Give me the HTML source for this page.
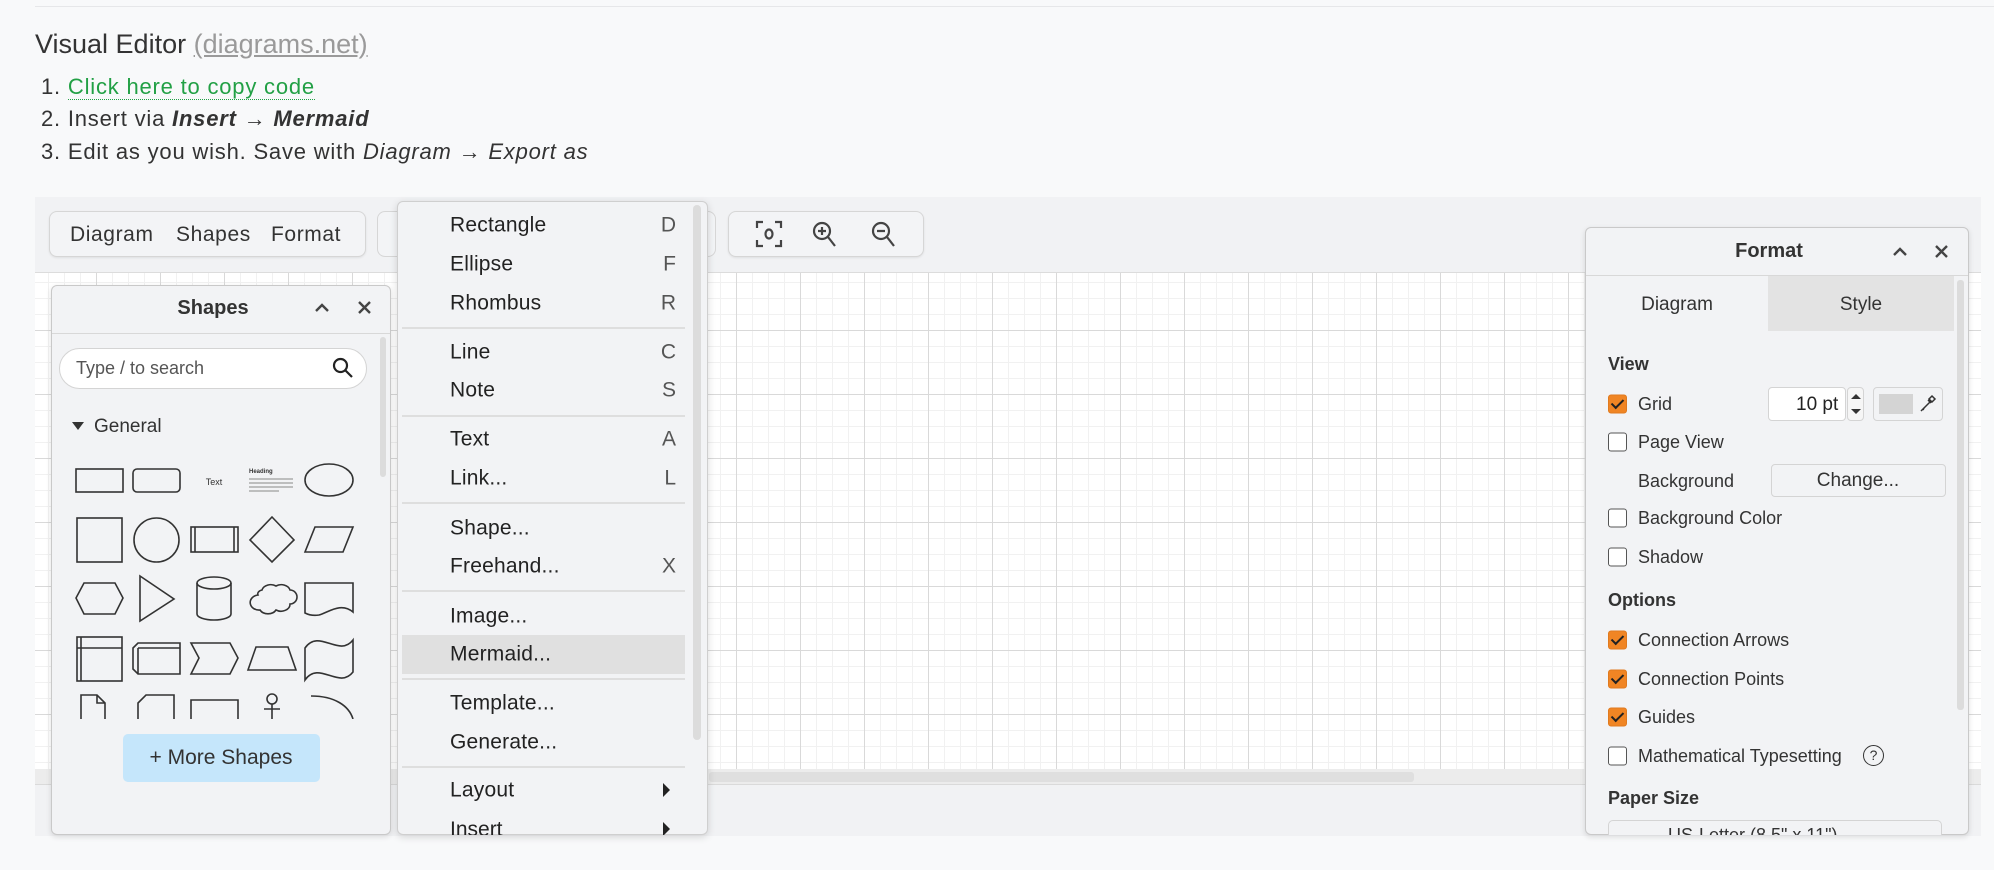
<!DOCTYPE html>
<html><head><meta charset="utf-8"><style>
*{box-sizing:border-box;margin:0;padding:0}
body{width:1994px;height:870px;background:#f8f9fa;font-family:"Liberation Sans",sans-serif;color:#333;position:relative;overflow:hidden}
.a{position:absolute}
.t{position:absolute;white-space:nowrap;line-height:1}
.mi{position:absolute;left:450px;font-size:21px;color:#222;white-space:nowrap;line-height:1;transform:translateY(-50%);letter-spacing:0.2px}
.sc{position:absolute;right:1318px;font-size:21px;color:#555;line-height:1;transform:translateY(-50%)}
.sep{position:absolute;left:402px;width:283px;height:2px;background:#dedede}
.fl{position:absolute;left:1638px;font-size:18px;color:#333;line-height:1;transform:translateY(-50%);white-space:nowrap}
.cb{position:absolute;left:1608px;width:19px;height:19px;border:1.5px solid #555;border-radius:3px;background:#fff;transform:translateY(-50%)}
.cb.on{background:#f08524;border-color:#e07a1f}
.cb.on::after{content:"";position:absolute;left:5px;top:1px;width:5px;height:10px;border:solid #222;border-width:0 2.5px 2.5px 0;transform:rotate(45deg)}
.fh{position:absolute;left:1608px;font-size:18px;font-weight:bold;color:#333;line-height:1;transform:translateY(-50%)}
.li{position:absolute;left:41px;font-size:22px;letter-spacing:0.8px;color:#333;white-space:nowrap;line-height:1}
.tb{position:absolute;top:224px;font-size:21px;letter-spacing:0.6px;color:#333;line-height:1}
</style></head><body>
<div class="a" style="left:35px;top:6px;width:1959px;height:1px;background:#e6e7e9"></div>
<div class="t" style="left:35px;top:31px;font-size:27px;color:#333">Visual Editor <span style="color:#9a9a9a;text-decoration:underline">(diagrams.net)</span></div>
<div class="li" style="top:76px">1. <span style="color:#22a045;border-bottom:1.5px dotted #22a045">Click here to copy code</span></div>
<div class="li" style="top:108px">2. Insert via <b><i>Insert</i></b> → <b><i>Mermaid</i></b></div>
<div class="li" style="top:141px">3. Edit as you wish. Save with <i>Diagram</i> → <i>Export as</i></div>

<!-- editor -->
<div class="a" style="left:35px;top:197px;width:1946px;height:639px;background:#f1f2f4"></div>
<div class="a" style="left:35px;top:272px;width:1946px;height:497px;background-color:#fff;background-image:linear-gradient(to right,#d9d9d9 1px,transparent 1px),linear-gradient(to bottom,#d9d9d9 1px,transparent 1px),linear-gradient(to right,#f1f1f1 1px,transparent 1px),linear-gradient(to bottom,#f1f1f1 1px,transparent 1px);background-size:64px 64px,64px 64px,16px 16px,16px 16px;background-position:61px 57px,61px 57px,13px 9px,13px 9px;border-top:1px solid #dcdcdc"></div>
<div class="a" style="left:35px;top:769px;width:1946px;height:16px;background:#ececec;border-bottom:1px solid #dadada"></div>
<div class="a" style="left:709px;top:772px;width:705px;height:10px;background:#dfdfdf;border-radius:3px"></div>

<!-- toolbars -->
<div class="a" style="left:49px;top:211px;width:317px;height:46px;border:1px solid #d6d6d6;border-radius:8px;background:#f3f4f6;box-shadow:0 1px 2px rgba(0,0,0,.08)"></div>
<div class="tb" style="left:70px">Diagram</div>
<div class="tb" style="left:176px">Shapes</div>
<div class="tb" style="left:271px">Format</div>
<div class="a" style="left:377px;top:211px;width:339px;height:46px;border:1px solid #d6d6d6;border-radius:8px;background:#f3f4f6"></div>
<div class="a" style="left:728px;top:211px;width:196px;height:46px;border:1px solid #d6d6d6;border-radius:8px;background:#f3f4f6;box-shadow:0 1px 2px rgba(0,0,0,.08)"></div>
<svg class="a" style="left:755px;top:219px" width="160" height="30" viewBox="0 0 160 30" fill="none" stroke="#444" stroke-width="2.2">
<path d="M2 9V3h6M20 3h6v6M26 21v6h-6M8 27H2v-6"/><ellipse cx="14" cy="15" rx="3.5" ry="4.5"/>
<circle cx="67" cy="12" r="8"/><path d="M73 18l7 9M63 12h8M67 8v8"/>
<circle cx="126" cy="12" r="8"/><path d="M132 18l7 9M122 12h8"/>
</svg>

<!-- shapes panel -->
<div class="a" style="left:51px;top:285px;width:340px;height:550px;background:#f2f3f5;border:1px solid #c9c9c9;border-radius:6px;box-shadow:0 2px 6px rgba(0,0,0,.12)"></div>
<div class="t" style="left:213px;top:298px;font-size:20px;font-weight:bold;color:#333;transform:translateX(-50%)">Shapes</div>
<svg class="a" style="left:313px;top:298px" width="60" height="20" fill="none" stroke="#444" stroke-width="2.4"><path d="M3 13l6-6 6 6"/><path d="M46 4l11 11M57 4L46 15"/></svg>
<div class="a" style="left:52px;top:333px;width:338px;height:1px;background:#d8d8d8"></div>
<div class="a" style="left:380px;top:337px;width:6px;height:140px;background:#dcdcdc;border-radius:3px"></div>
<div class="a" style="left:59px;top:348px;width:308px;height:41px;background:#fff;border:1px solid #d4d4d4;border-radius:21px"></div>
<div class="t" style="left:76px;top:359px;font-size:18px;color:#555">Type / to search</div>
<svg class="a" style="left:332px;top:357px" width="22" height="22" fill="none" stroke="#222" stroke-width="2.2"><circle cx="8.5" cy="8.5" r="6.5"/><path d="M13 13l7 7"/></svg>
<svg class="a" style="left:71px;top:421px" width="14" height="10"><path d="M1 1h12L7 9z" fill="#333"/></svg>
<div class="t" style="left:94px;top:417px;font-size:19px;color:#333">General</div>
<svg class="a" style="left:51px;top:440px" width="340" height="279" viewBox="51 440 340 279" fill="none" stroke="#333" stroke-width="1.6">
<rect x="76" y="469" width="47" height="23"/><rect x="133" y="469" width="47" height="23" rx="4"/>
<text x="214" y="485" font-size="9" fill="#333" stroke="none" text-anchor="middle" font-family="Liberation Sans">Text</text>
<text x="249" y="473" font-size="6" font-weight="bold" fill="#333" stroke="none" font-family="Liberation Sans">Heading</text>
<path d="M249 479h44M249 483h44M249 487h44M249 491h30" stroke="#888" stroke-width="1"/>
<ellipse cx="329" cy="480" rx="24" ry="16"/>
<rect x="77" y="518" width="45" height="44"/><ellipse cx="156.5" cy="540" rx="22.5" ry="22"/>
<rect x="191" y="527" width="47" height="25"/><path d="M195 527v25M234 527v25"/>
<path d="M272 517l22 23-22 22-22-22z"/><path d="M315 527h38l-10 25h-38z"/>
<path d="M84 583h31l8 15-8 16H84l-8-16z"/><path d="M140 576l34 23-34 22z"/>
<path d="M197 583v31a17 6 0 0 0 34 0v-31"/><ellipse cx="214" cy="583" rx="17" ry="6"/>
<path d="M262 590a9 7 0 0 1 14-4a9 7 0 0 1 14 4a6 6 0 0 1 0 14a9 7 0 0 1-14 6a9 7 0 0 1-16 0a7 6 0 0 1-2-15a6 4 0 0 1 4-5z"/>
<path d="M305 583h48v29c-12-10-24 0-34 3c-6 1-10 0-14-2z"/>
<rect x="77" y="637" width="45" height="44"/><path d="M81 637v44M77 648h45"/>
<path d="M133 648l5-5h42v31h-42l-5-5z M138 648h42M138 648v26"/>
<path d="M191 643h39l8 15-8 16h-39l8-16z"/><path d="M256 647h32l8 23h-48z"/>
<path d="M305 648c14-20 34 10 48-8v32c-14 18-34-12-48 8z"/>
<path d="M81 719v-24h16l8 8v16M97 695v8h8"/><path d="M138 719v-16l8-8h28v24"/>
<path d="M191 719v-19h47v19"/><circle cx="272" cy="699" r="5"/><path d="M272 704v15M264 709h16"/>
<path d="M311 696c24 0 38 10 42 23"/>
</svg>
<div class="a" style="left:123px;top:734px;width:197px;height:48px;background:#c5e6fb;border-radius:5px"></div>
<div class="t" style="left:221px;top:747px;font-size:21px;color:#333;transform:translateX(-50%)">+ More Shapes</div>

<!-- menu -->
<div class="a" style="left:397px;top:201px;width:311px;height:634px;background:#f2f3f5;border:1px solid #cfcfcf;border-radius:6px;box-shadow:0 2px 8px rgba(0,0,0,.15)"></div>
<div class="a" style="left:693px;top:205px;width:8px;height:535px;background:#dcdcdc;border-radius:4px"></div>
<div class="a" style="left:402px;top:635px;width:283px;height:39px;background:#e0e0e0"></div>
<div class="mi" style="top:225px">Rectangle</div><div class="sc" style="top:225px">D</div>
<div class="mi" style="top:264px">Ellipse</div><div class="sc" style="top:264px">F</div>
<div class="mi" style="top:303px">Rhombus</div><div class="sc" style="top:303px">R</div>
<div class="sep" style="top:327px"></div>
<div class="mi" style="top:352px">Line</div><div class="sc" style="top:352px">C</div>
<div class="mi" style="top:390px">Note</div><div class="sc" style="top:390px">S</div>
<div class="sep" style="top:415px"></div>
<div class="mi" style="top:439px">Text</div><div class="sc" style="top:439px">A</div>
<div class="mi" style="top:478px">Link...</div><div class="sc" style="top:478px">L</div>
<div class="sep" style="top:502px"></div>
<div class="mi" style="top:528px">Shape...</div>
<div class="mi" style="top:566px">Freehand...</div><div class="sc" style="top:566px">X</div>
<div class="sep" style="top:590px"></div>
<div class="mi" style="top:616px">Image...</div>
<div class="mi" style="top:654px">Mermaid...</div>
<div class="sep" style="top:678px"></div>
<div class="mi" style="top:703px">Template...</div>
<div class="mi" style="top:742px">Generate...</div>
<div class="sep" style="top:766px"></div>
<div class="mi" style="top:790px">Layout</div>
<div style="position:absolute;left:663px;top:783px;border-left:7px solid #222;border-top:7px solid transparent;border-bottom:7px solid transparent"></div>
<div style="position:absolute;left:397px;top:810px;width:311px;height:25px;overflow:hidden"><div class="t" style="left:53px;top:9px;font-size:21px;color:#222">Insert</div><div style="position:absolute;left:266px;top:12px;border-left:7px solid #222;border-top:7px solid transparent;border-bottom:7px solid transparent"></div></div>

<!-- format panel -->
<div class="a" style="left:1585px;top:227px;width:384px;height:608px;background:#f2f3f5;border:1px solid #c9c9c9;border-radius:6px;box-shadow:0 2px 6px rgba(0,0,0,.12);overflow:hidden">
 <div class="a" style="left:182px;top:48px;width:186px;height:55px;background:#e3e3e3"></div>
</div>
<div class="t" style="left:1769px;top:241px;font-size:20px;font-weight:bold;color:#333;transform:translateX(-50%)">Format</div>
<svg class="a" style="left:1891px;top:242px" width="60" height="20" fill="none" stroke="#444" stroke-width="2.4"><path d="M3 13l6-6 6 6"/><path d="M45 4l11 11M56 4L45 15"/></svg>
<div class="a" style="left:1586px;top:275px;width:382px;height:1px;background:#d8d8d8"></div>
<div class="t" style="left:1677px;top:295px;font-size:19px;color:#333;transform:translateX(-50%)">Diagram</div>
<div class="t" style="left:1861px;top:295px;font-size:19px;color:#333;transform:translateX(-50%)">Style</div>
<div class="a" style="left:1957px;top:280px;width:7px;height:430px;background:#dcdcdc;border-radius:3px"></div>
<div class="fh" style="top:364px">View</div>
<div class="cb on" style="top:404px"></div><div class="fl" style="top:404px">Grid</div>
<div class="a" style="left:1768px;top:387px;width:78px;height:34px;background:#fff;border:1px solid #d4d4d4;border-radius:4px"></div>
<div class="t" style="left:1796px;top:395px;font-size:19px;color:#222">10 pt</div>
<div class="a" style="left:1847px;top:387px;width:17px;height:34px;border:1px solid #d4d4d4;border-radius:4px;background:#f6f6f6"></div>
<svg class="a" style="left:1849px;top:390px" width="14" height="28"><path d="M2 9l5-5 5 5zM2 19l5 5 5-5z" fill="#333"/></svg>
<div class="a" style="left:1873px;top:387px;width:70px;height:34px;border:1px solid #d4d4d4;border-radius:4px;background:#f2f3f5"></div>
<div class="a" style="left:1879px;top:394px;width:34px;height:20px;background:#d4d4d4"></div>
<svg class="a" style="left:1919px;top:393px" width="18" height="20" fill="none" stroke="#333" stroke-width="1.5"><path d="M2 18l9-9M5 15l-1 2M13 3l3 3-3 3-3-3zM9 7l3 3"/></svg>
<div class="cb" style="top:442px"></div><div class="fl" style="top:442px">Page View</div>
<div class="fl" style="top:481px">Background</div>
<div class="a" style="left:1771px;top:464px;width:175px;height:33px;border:1px solid #d4d4d4;border-radius:4px;background:#f2f3f5"></div>
<div class="t" style="left:1858px;top:471px;font-size:19px;color:#333;transform:translateX(-50%)">Change...</div>
<div class="cb" style="top:518px"></div><div class="fl" style="top:518px">Background Color</div>
<div class="cb" style="top:557px"></div><div class="fl" style="top:557px">Shadow</div>
<div class="fh" style="top:600px">Options</div>
<div class="cb on" style="top:640px"></div><div class="fl" style="top:640px">Connection Arrows</div>
<div class="cb on" style="top:679px"></div><div class="fl" style="top:679px">Connection Points</div>
<div class="cb on" style="top:717px"></div><div class="fl" style="top:717px">Guides</div>
<div class="cb" style="top:756px"></div><div class="fl" style="top:756px">Mathematical Typesetting</div>
<div class="a" style="left:1863px;top:745px;width:21px;height:21px;border:1.6px solid #333;border-radius:50%;font-size:14px;line-height:18px;text-align:center;color:#333">?</div>
<div class="fh" style="top:798px">Paper Size</div>
<div style="position:absolute;left:1608px;top:820px;width:334px;height:15px;overflow:hidden"><div style="position:absolute;left:0;top:0;width:334px;height:34px;border:1px solid #d4d4d4;border-radius:5px;background:#f2f3f5"></div><div class="t" style="left:60px;top:6px;font-size:18px;color:#333">US-Letter (8.5" x 11")</div></div>
</body></html>
